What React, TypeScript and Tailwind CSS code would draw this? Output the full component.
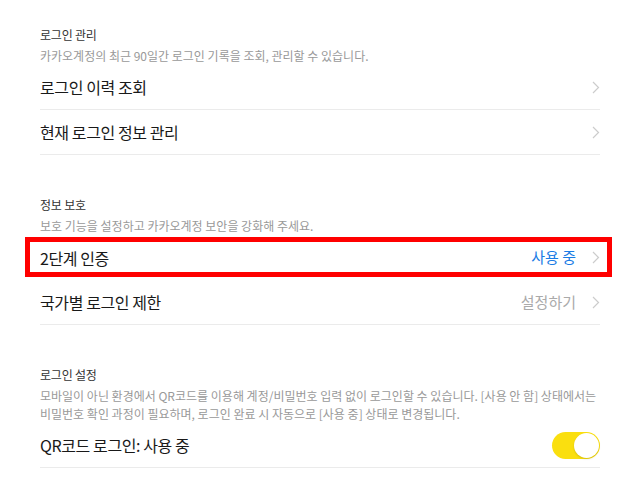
import React from "react";

const font = { fontFamily: '"Noto Sans CJK KR", "Noto Sans", sans-serif' };

function Chevron() {
  return (
    <svg width="8" height="13" viewBox="0 0 8 13" className="ml-[16px] shrink-0">
      <path d="M1 1l5.5 5.5L1 12" fill="none" stroke="#cccccc" strokeWidth="1.2" />
    </svg>
  );
}

function SectionHead({ title, desc }: { title: string; desc: React.ReactNode }) {
  return (
    <div>
      <div className="text-[12px] leading-[18px] text-[#333333] tracking-[-0.2px]">{title}</div>
      <div className="mt-[3px] text-[12px] leading-[18px] text-[#999999]">{desc}</div>
    </div>
  );
}

function Row({
  label,
  right,
  rightClass,
  border = true,
  highlight = false,
}: {
  label: string;
  right?: string;
  rightClass?: string;
  border?: boolean;
  highlight?: boolean;
}) {
  return (
    <div className={`relative flex h-[45px] items-center ${border ? "border-b border-[#ebebeb]" : ""}`}>
      <span className="flex-1 text-[16px] text-[#191919] tracking-[-0.4px]">{label}</span>
      {right && <span className={`text-[15px] ${rightClass}`}>{right}</span>}
      <Chevron />
      {highlight && (
        <div className="pointer-events-none absolute left-[-15px] right-[-12px] top-[2px] bottom-[3px] border-[5px] border-[#ff0000]" />
      )}
    </div>
  );
}

export default function App() {
  return (
    <div style={font} className="h-[500px] w-[640px] overflow-hidden bg-white">
      <div className="mx-[40px] pt-[26px]">
        <SectionHead title="로그인 관리" desc="카카오계정의 최근 90일간 로그인 기록을 조회, 관리할 수 있습니다." />
        <Row label="로그인 이력 조회" />
        <Row label="현재 로그인 정보 관리" />

        <div className="mt-[41px]">
          <SectionHead title="정보 보호" desc="보호 기능을 설정하고 카카오계정 보안을 강화해 주세요." />
          <Row label="2단계 인증" right="사용 중" rightClass="text-[#1a7ce5]" border={false} highlight />
          <Row label="국가별 로그인 제한" right="설정하기" rightClass="text-[#aaaaaa]" />
        </div>

        <div className="mt-[41px]">
          <SectionHead
            title="로그인 설정"
            desc={
              <>
                모바일이 아닌 환경에서 QR코드를 이용해 계정/비밀번호 입력 없이 로그인할 수 있습니다. [사용 안 함] 상태에서는
                <br />
                비밀번호 확인 과정이 필요하며, 로그인 완료 시 자동으로 [사용 중] 상태로 변경됩니다.
              </>
            }
          />
          <div className="flex h-[45px] items-center border-b border-[#ebebeb]">
            <span className="flex-1 text-[16px] text-[#191919] tracking-[-0.4px]">QR코드 로그인: 사용 중</span>
            <div className="relative h-[27px] w-[48px] rounded-full bg-[#fadf0f]">
              <div className="absolute right-[1px] top-[1px] h-[25px] w-[25px] rounded-full bg-white shadow-[0_1px_2px_rgba(0,0,0,0.15)]" />
            </div>
          </div>
        </div>
      </div>
    </div>
  );
}
